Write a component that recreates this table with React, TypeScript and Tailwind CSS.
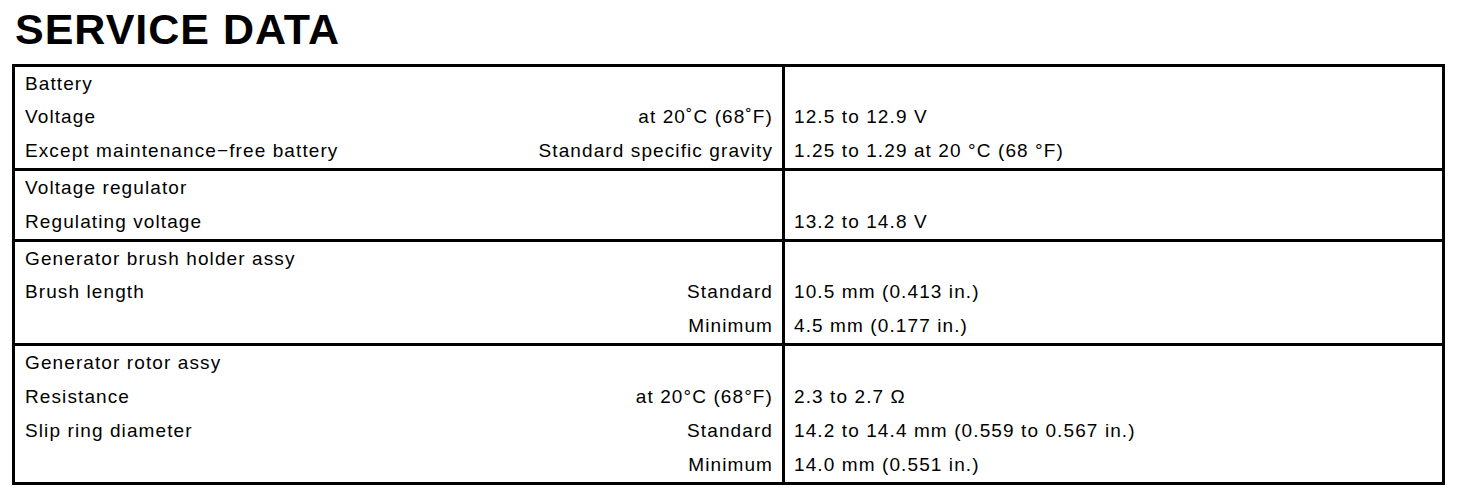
type Row = {
    label?: string
    cond?: string
    value?: string
}

type Section = {
    height: string
    rows: Row[]
}

// heights include the 3px divider under each block
const sections: Section[] = [
    {
        height: 'h-[104px]',
        rows: [
            { label: 'Battery' },
            { label: 'Voltage', cond: 'at 20˚C (68˚F)', value: '12.5 to 12.9 V' },
            { label: 'Except maintenance−free battery', cond: 'Standard specific gravity', value: '1.25 to 1.29 at 20 °C (68 °F)' },
        ],
    },
    {
        height: 'h-[71px]',
        rows: [
            { label: 'Voltage regulator' },
            { label: 'Regulating voltage', value: '13.2 to 14.8 V' },
        ],
    },
    {
        height: 'h-[104px]',
        rows: [
            { label: 'Generator brush holder assy' },
            { label: 'Brush length', cond: 'Standard', value: '10.5 mm (0.413 in.)' },
            { cond: 'Minimum', value: '4.5 mm (0.177 in.)' },
        ],
    },
    {
        height: 'h-[136px]',
        rows: [
            { label: 'Generator rotor assy' },
            { label: 'Resistance', cond: 'at 20°C (68°F)', value: '2.3 to 2.7 Ω' },
            { label: 'Slip ring diameter', cond: 'Standard', value: '14.2 to 14.4 mm (0.559 to 0.567 in.)' },
            { cond: 'Minimum', value: '14.0 mm (0.551 in.)' },
        ],
    },
]

export default function App() {
    return (
        <div className="min-h-screen bg-white text-black font-['Liberation_Sans',Arial,sans-serif]">
            <div className="pl-[15px] pt-[8px]">
                <h1 className="h-[43px] text-[43px] font-bold leading-none tracking-[1px]">SERVICE DATA</h1>
            </div>

            <div className="ml-[12px] mt-[13px] w-[1433px] border-[3px] border-black">
                {sections.map((section, i) => (
                    <div
                        key={i}
                        className={`flex flex-col ${section.height} ${i < sections.length - 1 ? 'border-b-[3px] border-black' : ''}`}
                    >
                        {section.rows.map((row, j) => (
                            <div key={j} className="flex flex-1 text-[19px] tracking-[1.1px]">
                                {/* left: item + condition */}
                                <div className="flex w-[770px] items-center justify-between border-r-[3px] border-black pl-[10px] pr-[9px]">
                                    <span>{row.label}</span>
                                    <span>{row.cond}</span>
                                </div>
                                {/* right: spec value */}
                                <div className="flex flex-1 items-center pl-[9px]">
                                    <span>{row.value}</span>
                                </div>
                            </div>
                        ))}
                    </div>
                ))}
            </div>
        </div>
    )
}
